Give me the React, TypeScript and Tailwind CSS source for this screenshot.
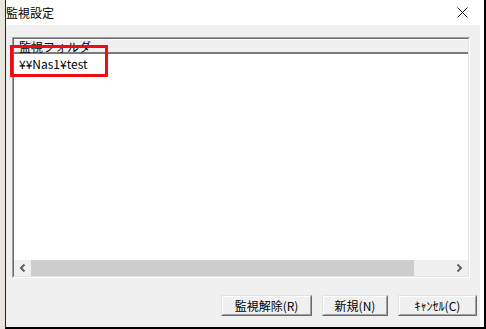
import React from "react"

const font = { fontFamily: '"Noto Sans CJK JP", "Liberation Sans", sans-serif' }

function ClassicButton({ label, width }: { label: string; width: string }) {
  return (
    <button
      className={`${width} h-[21px] border border-t-[#e3e3e3] border-l-[#e3e3e3] border-r-[#696969] border-b-[#696969] bg-[#f0f0f0] p-0`}
    >
      <div className="h-full w-full border border-t-white border-l-white border-r-[#a0a0a0] border-b-[#a0a0a0] flex items-center justify-center text-[12px] leading-[12px] text-black">
        {label}
      </div>
    </button>
  )
}

function Chevron({ dir }: { dir: "left" | "right" }) {
  return (
    <svg width="7" height="8" viewBox="0 0 7 8">
      {dir === "left" ? (
        <path d="M5.5 0.5 L2 4 L5.5 7.5" fill="none" stroke="#606060" strokeWidth="2" />
      ) : (
        <path d="M1.5 0.5 L5 4 L1.5 7.5" fill="none" stroke="#606060" strokeWidth="2" />
      )}
    </svg>
  )
}

export default function App() {
  return (
    <div className="w-[486px] h-[329px] flex bg-[#ebe9e2] overflow-hidden" style={font}>
      {/* window behind */}
      <div className="w-[5px] bg-[#e8e6de]" />

      <div className="flex-1 flex flex-col bg-white border-l border-l-[#262626] border-r-2 border-r-black border-b-2 border-b-black">
        {/* title bar */}
        <div className="h-[25px] flex items-center justify-between pr-[16px]">
          <span className="text-[12px] leading-[14px] text-black pt-px">監視設定</span>
          <svg width="11" height="11" viewBox="0 0 11 11">
            <path d="M0.5 0.5 L10.5 10.5 M10.5 0.5 L0.5 10.5" stroke="#1a1a1a" strokeWidth="1" />
          </svg>
        </div>

        {/* client area */}
        <div className="flex-1 flex flex-col bg-[#f0f0f0] mr-[4px] pt-[12px] pl-[6px] pr-[9px]">
          <div className="relative w-[458px] h-[241px] border border-t-[#a0a0a0] border-l-[#a0a0a0] border-r-white border-b-white">
            <div className="h-full flex flex-col border border-t-[#696969] border-l-[#696969] border-r-[#e3e3e3] border-b-[#e3e3e3] bg-white">
              {/* column header */}
              <div className="h-[15px] bg-[#f0f0f0] border-b-2 border-b-[#7a7a7a] border-t border-t-white">
                <span className="block pl-[5px] text-[12px] leading-[13px] text-black">監視フォルダ</span>
              </div>

              {/* rows */}
              <div className="flex-1 pt-[3px]">
                <div className="pl-[5px] text-[12px] leading-[14px] text-black">¥¥Nas1¥test</div>
              </div>

              {/* horizontal scrollbar */}
              <div className="h-[16px] flex bg-[#f0f0f0]">
                <div className="w-[17px] flex items-center justify-center">
                  <Chevron dir="left" />
                </div>
                <div className="w-[383px] bg-[#cdcdcd]" />
                <div className="flex-1" />
                <div className="w-[17px] flex items-center justify-center">
                  <Chevron dir="right" />
                </div>
              </div>
            </div>

            {/* annotation */}
            <div className="absolute left-[-3px] top-[7px] w-[98px] h-[32px] border-[3px] border-[#f00a14]" />
          </div>

          {/* buttons */}
          <div className="mt-[17px] flex justify-end gap-[10px] pr-[3px] -mr-[9px]">
            <ClassicButton label="監視解除(R)" width="w-[91px]" />
            <ClassicButton label="新規(N)" width="w-[66px]" />
            <ClassicButton label="ｷｬﾝｾﾙ(C)" width="w-[79px]" />
          </div>
        </div>
      </div>
    </div>
  )
}
